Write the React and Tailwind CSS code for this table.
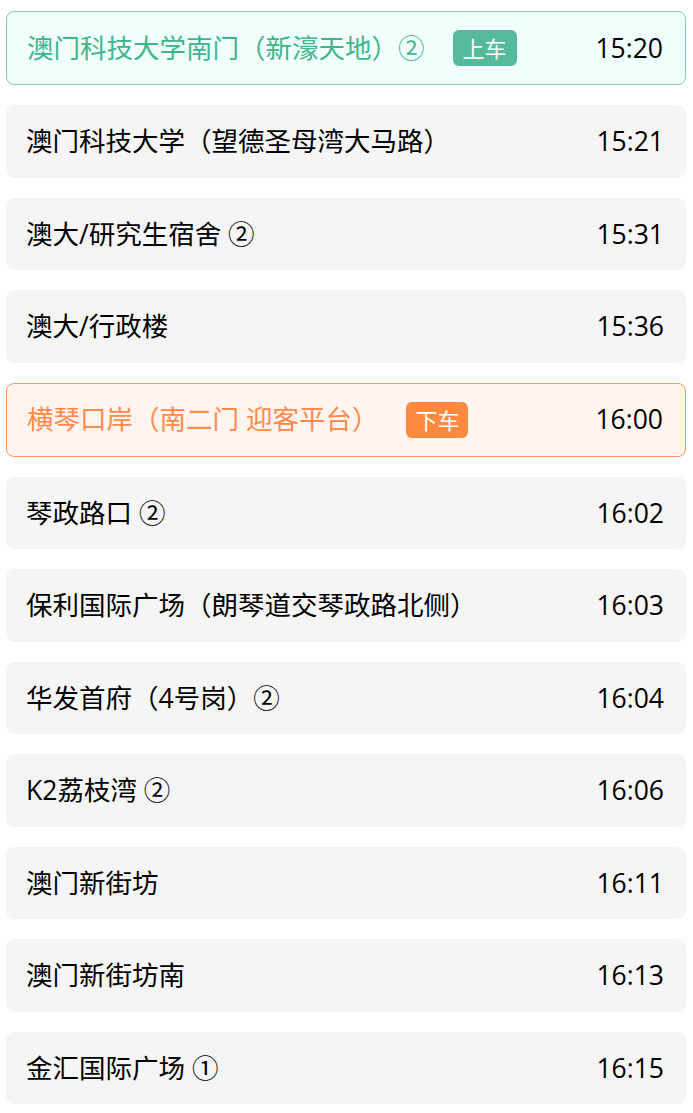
const STOPS = [
  { name: '澳门科技大学南门（新濠天地）②', time: '15:20', kind: 'on' },
  { name: '澳门科技大学（望德圣母湾大马路）', time: '15:21' },
  { name: '澳大/研究生宿舍 ②', time: '15:31' },
  { name: '澳大/行政楼', time: '15:36' },
  { name: '横琴口岸（南二门 迎客平台）', time: '16:00', kind: 'off' },
  { name: '琴政路口 ②', time: '16:02' },
  { name: '保利国际广场（朗琴道交琴政路北侧）', time: '16:03' },
  { name: '华发首府（4号岗）②', time: '16:04' },
  { name: 'K2荔枝湾 ②', time: '16:06' },
  { name: '澳门新街坊', time: '16:11' },
  { name: '澳门新街坊南', time: '16:13' },
  { name: '金汇国际广场 ①', time: '16:15' },
]

function StopRow({ stop }) {
  if (stop.kind === 'on') {
    return (
      <div className="flex h-[74px] items-center justify-between rounded-lg border border-[#7fd0b3] bg-[#f0fffb] pl-[20px] pr-[22px]">
        <div className="flex items-center">
          <span className="text-[#3fb58c]">{stop.name}</span>
          <span className="ml-[28px] flex h-[36px] w-[64px] items-center justify-center rounded-md bg-[#55b99b] text-[22px] text-white">上车</span>
        </div>
        <span className="text-black">{stop.time}</span>
      </div>
    )
  }
  if (stop.kind === 'off') {
    return (
      <div className="flex h-[74px] items-center justify-between rounded-lg border border-[#ff9559] bg-[#fff4ef] pl-[20px] pr-[22px]">
        <div className="flex items-center">
          <span className="text-[#ff8a4a]">{stop.name}</span>
          <span className="ml-[28px] flex h-[36px] w-[62px] items-center justify-center rounded-md bg-[#ff8a3f] text-[22px] text-white">下车</span>
        </div>
        <span className="text-black">{stop.time}</span>
      </div>
    )
  }
  return (
    <div className="flex h-[72.5px] items-center justify-between rounded-lg bg-[#f5f5f5] pl-[20px] pr-[22px]">
      <span className="text-black">{stop.name}</span>
      <span className="text-black">{stop.time}</span>
    </div>
  )
}

export default function App() {
  return (
    <div
      className="min-h-screen bg-white pt-[11px] pl-[6px] pr-[7px] text-[26.5px] leading-none"
      style={{ fontFamily: '"Open Sans", "Noto Sans CJK SC", sans-serif' }}
    >
      <div className="flex flex-col gap-[20px]">
        {STOPS.map((stop) => (
          <StopRow key={stop.name} stop={stop} />
        ))}
      </div>
    </div>
  )
}
